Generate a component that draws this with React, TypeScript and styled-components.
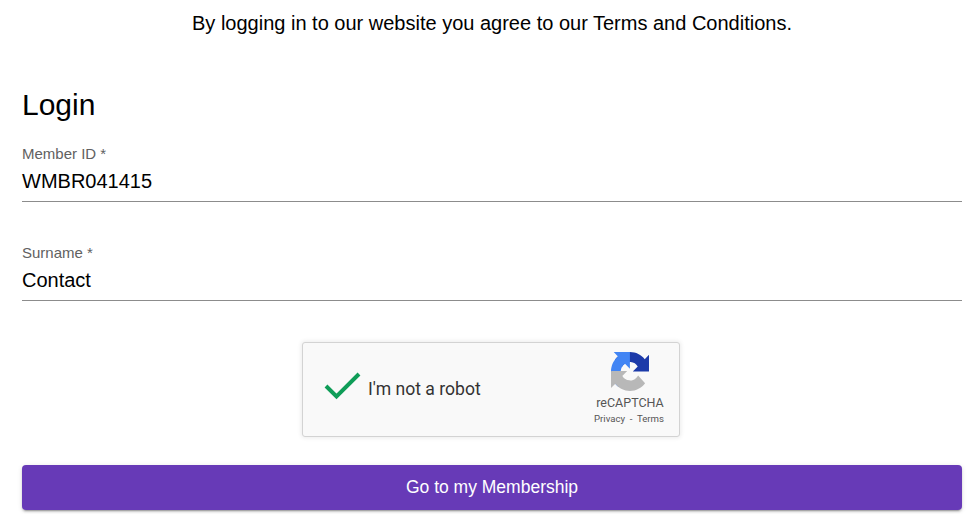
import React from "react";
import styled, { createGlobalStyle } from "styled-components";

const Global = createGlobalStyle`
  html, body { margin: 0; padding: 0; background: #fff; }
  body { font-family: "Liberation Sans", Arial, sans-serif; }
`;

const Page = styled.main`
  width: 972px;
  height: 514px;
  box-sizing: border-box;
  padding: 0 10px 0 22px;
  overflow: hidden;
`;

const Notice = styled.p`
  margin: 0;
  padding-top: 11px;
  height: 36px;
  box-sizing: border-box;
  line-height: 24px;
  font-size: 20px;
  color: #000;
  text-align: center;
`;

const Title = styled.h1`
  margin: 51px 0 0;
  height: 36px;
  line-height: 36px;
  font-size: 30px;
  font-weight: 400;
  color: #000;
`;

const Form = styled.form`
  display: flex;
  flex-direction: column;
  margin-top: 20px;
`;

const Field = styled.div`
  display: flex;
  flex-direction: column;
  height: 55px;
  padding-top: 3px;
  border-bottom: 1px solid #8c8c8c;
  margin-bottom: 40px;
`;

const Label = styled.label`
  height: 16px;
  line-height: 16px;
  font-size: 15px;
  color: #616161;
`;

const Value = styled.div`
  margin-top: 5px;
  height: 28px;
  line-height: 28px;
  font-size: 20px;
  color: #000;
`;

const Captcha = styled.div`
  align-self: center;
  margin: 1px 2px 28px 0;
  width: 378px;
  height: 95px;
  box-sizing: border-box;
  display: flex;
  align-items: stretch;
  background: #f9f9f9;
  border: 1px solid #d3d3d3;
  border-radius: 3px;
  box-shadow: 0 0 4px 1px rgba(0, 0, 0, 0.08);
  font-family: Roboto, "Liberation Sans", sans-serif;
`;

const CheckIcon = styled.svg`
  width: 40px;
  height: 32px;
  margin: 27px 0 0 20px;
  flex: none;
`;

const CaptchaText = styled.span`
  margin: 34px 0 0 5px;
  height: 24px;
  line-height: 24px;
  font-size: 17.6px;
  color: #333;
  flex: 1;
`;

const Brand = styled.div`
  width: 92px;
  flex: none;
  margin-right: 3px;
  display: flex;
  flex-direction: column;
  align-items: center;
  padding-top: 9px;
`;

const BrandLogo = styled.svg`
  width: 38px;
  height: 39px;
  display: block;
`;

const BrandName = styled.div`
  margin-top: 5px;
  line-height: 14px;
  font-size: 12.5px;
  color: #555;
`;

const BrandLinks = styled.div`
  margin-top: 2px;
  padding-right: 2px;
  line-height: 13px;
  font-size: 9.6px;
  color: #555;
  white-space: pre;
`;

const Submit = styled.button`
  width: 100%;
  height: 45px;
  padding: 0;
  border: 0;
  border-radius: 4px;
  background: #673ab7;
  color: #fff;
  font-family: "Liberation Sans", Arial, sans-serif;
  font-size: 17.5px;
  box-shadow: 0 3px 1px -2px rgba(0,0,0,.2), 0 2px 2px 0 rgba(0,0,0,.14), 0 1px 5px 0 rgba(0,0,0,.12);
`;

export default function App() {
  return (
    <Page>
      <Global />
      <Notice>By logging in to our website you agree to our Terms and Conditions.</Notice>
      <Title>Login</Title>
      <Form onSubmit={(e) => e.preventDefault()}>
        <Field>
          <Label>Member ID *</Label>
          <Value>WMBR041415</Value>
        </Field>
        <Field>
          <Label>Surname *</Label>
          <Value>Contact</Value>
        </Field>
        <Captcha>
          <CheckIcon viewBox="0 0 40 32" aria-hidden="true">
            <path d="M3 16 L13.5 26.5 L36 4" fill="none" stroke="#0f9d58" strokeWidth="4" />
          </CheckIcon>
          <CaptchaText>I'm not a robot</CaptchaText>
          <Brand>
            <BrandLogo viewBox="0 0 64 64" preserveAspectRatio="none" aria-hidden="true">
              <path d="M64 31.955l-.033-1.37V4.687l-7.16 7.16C50.948 4.674 42.033.093 32.05.093c-10.4 0-19.622 4.96-25.458 12.64l11.736 11.86a15.55 15.55 0 0 1 4.754-5.334c2.05-1.6 4.952-2.906 8.968-2.906.485 0 .86.057 1.135.163 4.976.393 9.288 3.14 11.828 7.124l-8.307 8.307 26.283.001" fill="#1c3aa9" />
              <path d="M31.862.094l-1.37.033H4.594l7.16 7.16C4.58 13.147 0 22.06 0 32.046c0 10.4 4.96 19.622 12.64 25.458l11.86-11.736a15.55 15.55 0 0 1-5.334-4.754c-1.6-2.05-2.906-4.952-2.906-8.968 0-.485.057-.86.163-1.135.393-4.976 3.14-9.288 7.124-11.828l8.307 8.307L31.862.094" fill="#4285f4" />
              <path d="M.001 31.955l.033 1.37v25.898l7.16-7.16c5.86 7.173 14.774 11.754 24.76 11.754 10.4 0 19.622-4.96 25.458-12.64L45.678 38.42a15.55 15.55 0 0 1-4.754 5.334c-2.05 1.6-4.952 2.906-8.968 2.906-.485 0-.86-.057-1.135-.163-4.976-.393-9.288-3.14-11.828-7.124l8.307-8.307-26.283.001" fill="#b8b8b8" />
            </BrandLogo>
            <BrandName>reCAPTCHA</BrandName>
            <BrandLinks>Privacy  -  Terms</BrandLinks>
          </Brand>
        </Captcha>
        <Submit type="submit">Go to my Membership</Submit>
      </Form>
    </Page>
  );
}
